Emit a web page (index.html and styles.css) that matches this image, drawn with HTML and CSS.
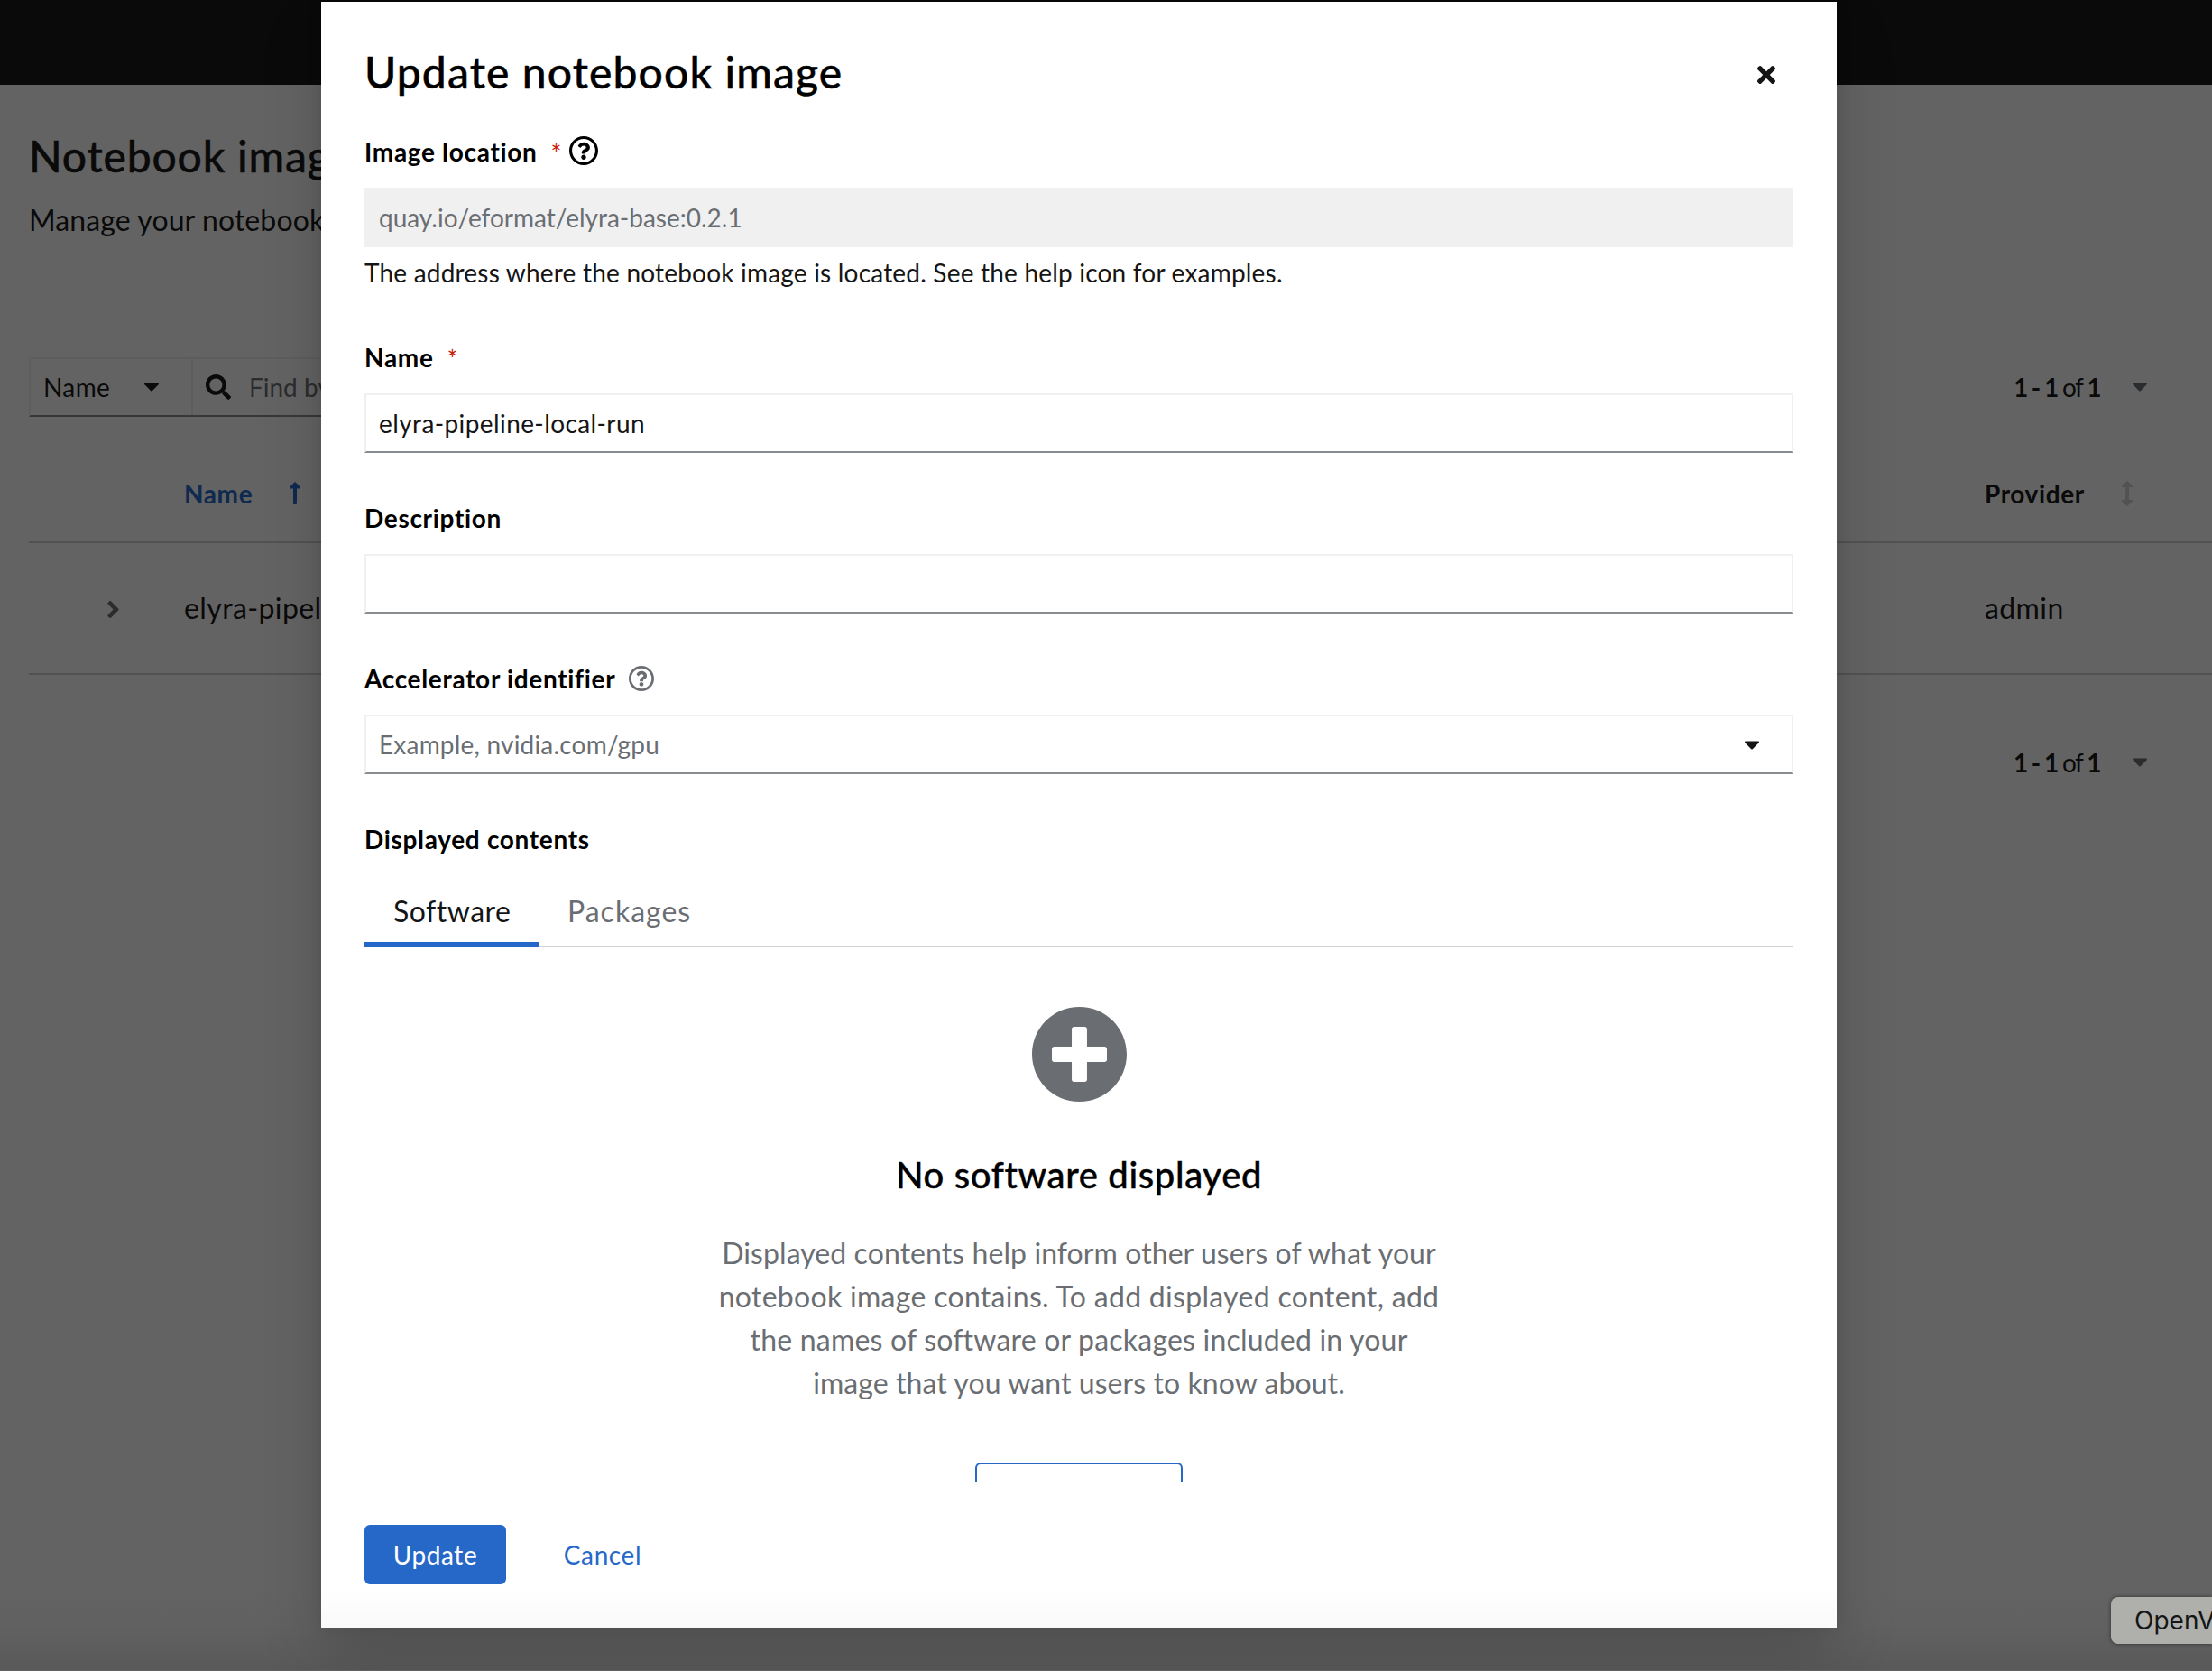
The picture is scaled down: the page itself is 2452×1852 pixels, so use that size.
FILE: index.html
```html
<!DOCTYPE html>
<html lang="en">
<head>
<meta charset="utf-8">
<title>Notebook images</title>
<link rel="stylesheet" href="styles.css">
</head>
<body>
<svg class="sprite" aria-hidden="true">
  <symbol id="caret" viewBox="11 192 298 169"><path d="M31.3 192h257.3c17.8 0 26.7 21.5 14.1 34.1L174.1 354.7c-7.8 7.8-20.5 7.8-28.3 0L17.2 226.1C4.6 213.5 13.5 192 31.3 192z"/></symbol>
  <symbol id="help" viewBox="8 8 496 496"><path d="M256 8C119.043 8 8 119.083 8 256c0 136.997 111.043 248 248 248s248-111.003 248-248C504 119.083 392.957 8 256 8zm0 448c-110.532 0-200-89.431-200-200 0-110.495 89.472-200 200-200 110.491 0 200 89.471 200 200 0 110.53-89.431 200-200 200zm107.244-255.2c0 67.052-72.421 68.084-72.421 92.863V300c0 6.627-5.373 12-12 12h-45.647c-6.627 0-12-5.373-12-12v-8.659c0-35.745 27.1-50.034 47.579-61.516 17.561-9.845 28.324-16.541 28.324-29.579 0-17.246-21.999-28.693-39.784-28.693-23.189 0-33.894 10.977-48.942 29.969-4.057 5.12-11.46 6.071-16.666 2.124l-27.824-21.098c-5.107-3.872-6.251-11.066-2.644-16.363C184.846 131.491 214.94 112 261.794 112c49.071 0 101.45 38.304 101.45 88.8zM298 368c0 23.159-18.841 42-42 42s-42-18.841-42-42 18.841-42 42-42 42 18.841 42 42z"/></symbol>
</svg>

<div class="page">
  <header class="masthead"></header>
  <main class="content">
    <h1 class="page-title">Notebook images</h1>
    <p class="page-intro">Manage your notebook images.</p>
    <div class="toolbar">
      <div class="filter">
        <div class="filter-select"><span>Name</span><svg class="caret"><use href="#caret"/></svg></div>
        <div class="filter-search">
          <svg class="search-icon" viewBox="0 0 512 512"><path d="M505 442.7L405.3 343c-4.5-4.5-10.6-7-17-7H372c27.6-35.3 44-79.7 44-128C416 93.1 322.9 0 208 0S0 93.1 0 208s93.1 208 208 208c48.3 0 92.7-16.4 128-44v16.3c0 6.4 2.5 12.5 7 17l99.7 99.7c9.4 9.4 24.6 9.4 33.9 0l28.3-28.3c9.4-9.4 9.4-24.6.1-34zM208 336c-70.7 0-128-57.2-128-128 0-70.7 57.2-128 128-128 70.7 0 128 57.2 128 128 0 70.7-57.2 128-128 128z"/></svg>
          <span>Find by name</span>
        </div>
      </div>
      <div class="pagination"><span><b>1 - 1</b> of <b>1</b></span><svg class="caret"><use href="#caret"/></svg></div>
    </div>
    <div class="table">
      <div class="row head">
        <span></span>
        <span class="th sorted">Name<svg class="sort-up" viewBox="0 0 12 25"><path d="M5.300.4a1 1 0 0 1 1.400 0L12 6v1.500H8V24a1 1 0 0 1-1 1H5a1 1 0 0 1-1-1V7.500H0V6z"/></svg></span>
        <span class="th provider">Provider<svg class="sort-both" viewBox="0 0 12 28"><path d="M5.300.4a1 1 0 0 1 1.400 0L12 5.500V7H8v14h4v1.500l-5.300 5.100a1 1 0 0 1-1.400 0L0 22.500V21h4V7H0V5.500z"/></svg></span>
      </div>
      <div class="row">
        <svg class="chevron" viewBox="24.700 96 206.700 320"><path d="M224.3 273l-136 136c-9.4 9.4-24.6 9.4-33.9 0l-22.6-22.6c-9.4-9.4-9.4-24.6 0-33.9l96.4-96.4-96.4-96.4c-9.4-9.4-9.4-24.6 0-33.9L54.3 103c9.4-9.4 24.6-9.4 33.9 0l136 136c9.5 9.4 9.5 24.6.1 34z"/></svg>
        <span class="td">elyra-pipeline-local-run</span>
        <span class="td">admin</span>
      </div>
    </div>
    <div class="pagination bottom"><span><b>1 - 1</b> of <b>1</b></span><svg class="caret"><use href="#caret"/></svg></div>
  </main>
</div>

<div class="backdrop">
  <section class="modal" role="dialog" aria-label="Update notebook image">
    <div class="modal-head">
      <h2 class="modal-title">Update notebook image</h2>
      <svg class="close" viewBox="0 80 352 352"><path d="M242.72 256l100.07-100.07c12.28-12.28 12.28-32.19 0-44.48l-22.24-22.24c-12.28-12.28-32.19-12.28-44.48 0L176 189.28 75.93 89.21c-12.28-12.28-32.19-12.28-44.48 0L9.21 111.45c-12.28 12.28-12.28 32.19 0 44.48L109.28 256 9.21 356.07c-12.28 12.28-12.28 32.19 0 44.48l22.24 22.24c12.28 12.28 32.2 12.28 44.48 0L176 322.72l100.07 100.07c12.28 12.28 32.2 12.28 44.48 0l22.24-22.24c12.28-12.28 12.28-32.19 0-44.48L242.72 256z"/></svg>
    </div>
    <div class="modal-body">
      <div class="field location">
        <div class="label"><span>Image location</span><i class="star">*</i><svg class="help-lg"><use href="#help"/></svg></div>
        <div class="input disabled">quay.io/eformat/elyra-base:0.2.1</div>
        <p class="helper">The address where the notebook image is located. See the help icon for examples.</p>
      </div>
      <div class="field">
        <div class="label"><span>Name</span><i class="star">*</i></div>
        <div class="input">elyra-pipeline-local-run</div>
      </div>
      <div class="field">
        <div class="label"><span>Description</span></div>
        <div class="input"></div>
      </div>
      <div class="field">
        <div class="label"><span>Accelerator identifier</span><svg class="help-sm"><use href="#help"/></svg></div>
        <div class="input select"><span>Example, nvidia.com/gpu</span><svg class="caret"><use href="#caret"/></svg></div>
      </div>
      <div class="label"><span>Displayed contents</span></div>
      <div class="tabs"><div class="tab active"><span>Software</span></div><div class="tab packages"><span>Packages</span></div></div>
      <div class="empty">
        <svg class="plus" viewBox="8 8 496 496"><path d="M256 8C119 8 8 119 8 256s111 248 248 248 248-111 248-248S393 8 256 8zm144 276c0 6.600-5.400 12-12 12h-92v92c0 6.600-5.400 12-12 12h-56c-6.600 0-12-5.400-12-12v-92h-92c-6.600 0-12-5.400-12-12v-56c0-6.600 5.400-12 12-12h92v-92c0-6.600 5.400-12 12-12h56c6.600 0 12 5.400 12 12v92h92c6.600 0 12 5.400 12 12v56z"/></svg>
        <h3 class="empty-title">No software displayed</h3>
        <p class="empty-text">Displayed contents help inform other users of what your<br><span class="loose">notebook image contains. To add displayed content, add</span><br><span class="mid">the names of software or packages included in your</span><br>image that you want users to know about.</p>
        <div class="empty-action"></div>
      </div>
    </div>
    <footer class="modal-foot"><div class="btn primary">Update</div><div class="btn link">Cancel</div></footer>
  </section>
</div>
<div class="edge"></div>
<div class="os-tip">OpenVPN</div>
</body>
</html>
```
FILE: styles.css
```css
* { box-sizing: border-box; margin: 0; }
html, body { height: 100%; overflow: hidden; }
body { font: 28px/42px Lato, "Open Sans", sans-serif; color: #151515; background: #fff; }
svg { display: block; flex: none; fill: currentColor; }
.sprite { position: absolute; width: 0; height: 0; }
.caret { width: 16px; height: 10px; }

/* Page behind the dialog */
.page { width: 2452px; height: 1852px; overflow: hidden; background: #fff; }
.masthead { height: 94px; background: #151515; }
.content { padding: 48px 0 0 32px; }
.page-title { font-size: 48px; line-height: 62px; font-weight: 500; letter-spacing: 0.8px; white-space: nowrap; -webkit-text-stroke: 0.4px; }
.page-intro { font-size: 32px; line-height: 48px; margin-top: 16px; letter-spacing: 0.1px; }
.toolbar { display: flex; justify-content: space-between; margin-top: 128px; height: 66px; }
.filter { display: flex; width: 640px; border: 2px solid #f0f0f0; border-bottom-color: #8a8d90; align-items: stretch; }
.filter-select { display: flex; align-items: center; width: 180px; padding: 0 36px 0 14px; justify-content: space-between; border-right: 2px solid #f0f0f0; letter-spacing: 0.4px; }
.filter-search { display: flex; align-items: center; padding-left: 14px; gap: 20px; color: #6a6e73; }
.search-icon { width: 28px; height: 28px; color: #151515; }
.pagination { display: flex; align-items: center; justify-content: space-between; width: 148px; margin-right: 72px; height: 66px; }
.pagination span { white-space: nowrap; letter-spacing: -1.6px; word-spacing: 0; }
.pagination b { font-weight: 700; }
.pagination .caret { color: #6a6e73; }
.table { margin-top: 34px; }
.row { display: grid; grid-template-columns: 172px 1996px 1fr; align-items: center; height: 146px; border-bottom: 2px solid #d2d2d2; }
.row.head { height: 106px; padding-bottom: 3px; }
.th { display: flex; align-items: center; font-weight: 700; letter-spacing: 0.6px; }
.sorted { color: #2668c8; gap: 41px; }
.provider { gap: 41px; }
.sort-up { width: 12px; height: 25px; }
.sort-both { width: 12px; height: 28px; color: #d2d2d2; }
.chevron { width: 13px; height: 19px; margin: 2px 0 0 87px; color: #6a6e73; }
.td { font-size: 32px; letter-spacing: 0.4px; }
.bottom { margin: 64px 72px 0 auto; }

/* Dialog */
.backdrop { position: absolute; inset: 0; display: flex; justify-content: center; padding: 2px 60px 48px 0; background: rgba(3, 3, 3, 0.62); }
.modal { width: 1680px; display: flex; flex-direction: column; padding: 47px 48px 48px; background: #fff; box-shadow: 0 32px 64px rgba(3, 3, 3, 0.16), 0 0 16px rgba(3, 3, 3, 0.1); }
.modal-head { display: flex; align-items: center; justify-content: space-between; padding-right: 20px; color: #000; }
.modal-title { font-size: 48px; line-height: 62px; font-weight: 500; letter-spacing: 1.1px; -webkit-text-stroke: 0.4px; }
.close { width: 20px; height: 20px; margin-top: 6px; color: #151515; }
.modal-body { flex: 1; min-height: 0; overflow: hidden; padding-top: 36px; }
.field { margin-bottom: 51px; }
.location { margin-bottom: 52px; }
.label { display: flex; align-items: center; height: 42px; color: #000; font-weight: 700; letter-spacing: 0.68px; }
.star { margin: 4px 0 0 15px; color: #c9190b; font-style: normal; font-weight: 400; letter-spacing: 0; }
.help-lg { width: 32px; height: 32px; margin: -3px 0 0 9px; }
.help-sm { width: 28px; height: 28px; margin-left: 15px; color: #6a6e73; }
.input { display: flex; align-items: center; height: 66px; margin-top: 19px; padding: 0 14px 1px; border: 2px solid #f0f0f0; border-bottom-color: #8a8d90; letter-spacing: 0.4px; }
.disabled { border-color: #f0f0f0; background: #f0f0f0; color: #6a6e73; letter-spacing: 0; }
.select { justify-content: space-between; padding-right: 36px; color: #6a6e73; letter-spacing: 0.2px; }
.select .caret { margin-top: 2px; color: #151515; }
.helper { margin-top: 7px; letter-spacing: 0.2px; white-space: nowrap; }
.tabs { display: flex; height: 82px; margin-top: 17px; font-size: 32px; line-height: 48px; box-shadow: inset 0 -2px #d2d2d2; color: #6a6e73; letter-spacing: 0.5px; }
.tab { padding: 18px 0 0 32px; }
.active { width: 194px; color: #151515; box-shadow: inset 0 -6px #2668c8; }
.packages { padding-left: 31px; letter-spacing: 1px; }
.empty { display: flex; flex-direction: column; align-items: center; padding-top: 66px; text-align: center; }
.plus { width: 105px; height: 105px; color: #6a6e73; }
.empty-title { margin-top: 55px; font-size: 40px; line-height: 52px; font-weight: 500; letter-spacing: 0.65px; color: #000; white-space: nowrap; -webkit-text-stroke: 0.4px; }
.empty-text { margin-top: 37px; font-size: 32px; line-height: 48px; color: #6a6e73; white-space: nowrap; letter-spacing: 0.08px; }
.loose { letter-spacing: 0.3px; }
.mid { letter-spacing: 0.2px; }
.empty-action { width: 230px; height: 66px; margin-top: 64px; border: 2px solid #2668c8; border-radius: 6px; }
.modal-foot { display: flex; padding-top: 48px; }
.btn { height: 66px; line-height: 66px; border-radius: 6px; text-align: center; letter-spacing: 0.6px; }
.primary { width: 157px; background: #2668c8; color: #fff; }
.link { margin-left: 32px; width: 150px; color: #2668c8; }

/* Window edge shade and system tooltip */
.edge { position: absolute; left: 0; right: 0; bottom: 0; height: 92px; background: linear-gradient(rgba(0, 0, 0, 0), rgba(0, 0, 0, 0.025) 48%, rgba(0, 0, 0, 0.1)); border-bottom: 1px solid #665f63; }
.os-tip { position: absolute; left: 2340px; top: 1770px; width: 112px; height: 52px; padding-left: 26px; overflow: hidden; border-radius: 8px 0 0 8px; background: #afafac; box-shadow: 0 0 4px rgba(0, 0, 0, 0.5); font: 28px/52px Inter, sans-serif; }
```
